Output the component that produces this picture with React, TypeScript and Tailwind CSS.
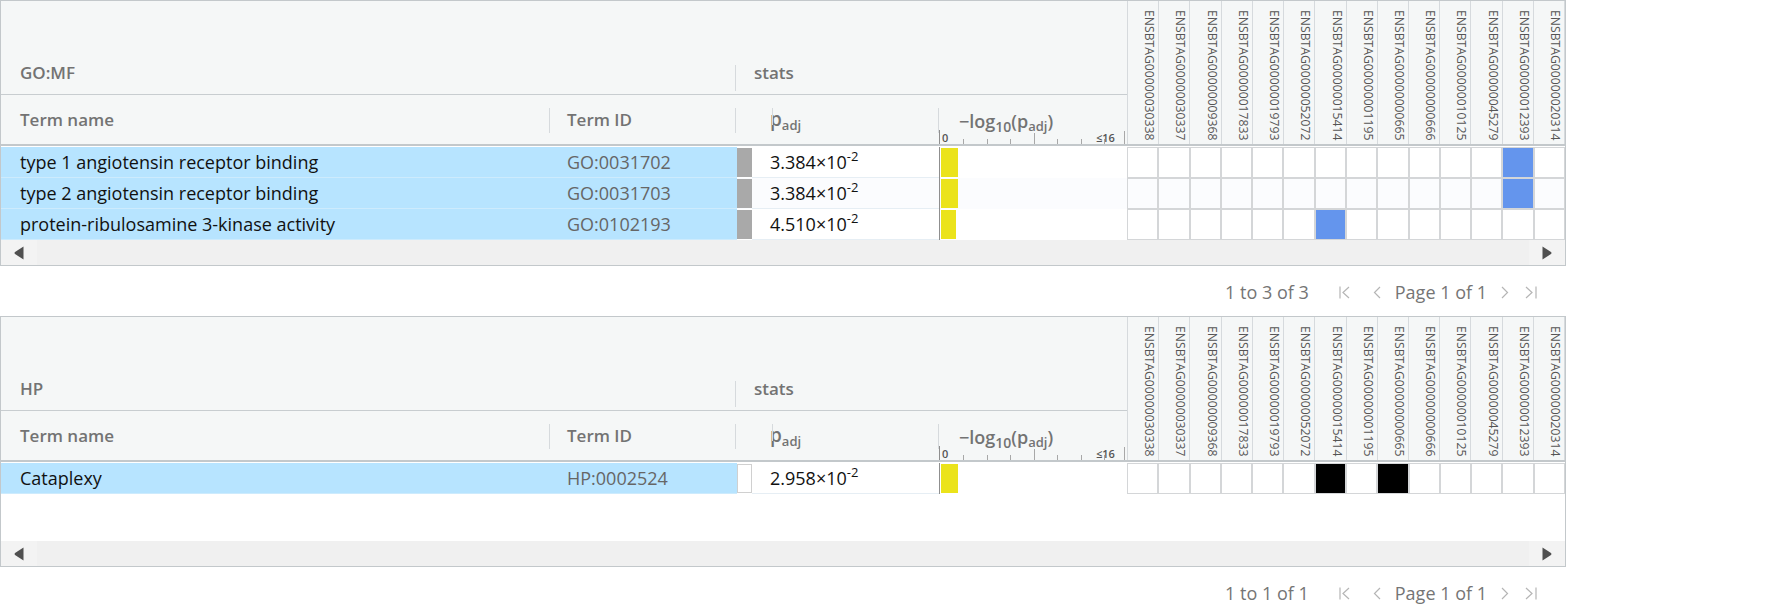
import React from "react";

const GENES = [
  "ENSBTAG00000030338",
  "ENSBTAG00000030337",
  "ENSBTAG00000009368",
  "ENSBTAG00000017833",
  "ENSBTAG00000019793",
  "ENSBTAG00000052072",
  "ENSBTAG00000015414",
  "ENSBTAG00000001195",
  "ENSBTAG00000000665",
  "ENSBTAG00000000666",
  "ENSBTAG00000010125",
  "ENSBTAG00000045279",
  "ENSBTAG00000012393",
  "ENSBTAG00000020314",
];

type Row = {
  name: string;
  id: string;
  mant: string;
  bar: number;
  hits: number[];
};

type TableProps = {
  source: string;
  rows: Row[];
  markClass: string;
  hitClass: string;
  bodyClass: string;
  count: string;
};

const Axis = () => (
  <svg width="188" height="14" className="absolute bottom-0 left-0" viewBox="0 0 188 14">
    <line x1="0.5" y1="0" x2="0.5" y2="14" stroke="#8f8f8f" />
    <text x="3" y="12" fontSize="11" fill="#555" fontFamily="Open Sans, sans-serif">0</text>
    {[24, 48, 71, 118, 142, 165].map((x) => (
      <line key={x} x1={x + 0.5} y1="9" x2={x + 0.5} y2="14" stroke="#a8a8a8" />
    ))}
    <line x1="95.5" y1="3" x2="95.5" y2="14" stroke="#a8a8a8" />
    <text x="157" y="12" fontSize="11" fill="#555" fontFamily="Open Sans, sans-serif">≤16</text>
    <line x1="185.5" y1="1" x2="185.5" y2="14" stroke="#a8a8a8" />
  </svg>
);

const Sep = ({ className }: { className: string }) => (
  <div className={`absolute w-px bg-[#d6dadd] ${className}`} />
);

const Scrollbar = () => (
  <div className="flex h-[25px] bg-[#f0f0f0]">
    <div className="flex w-[36px] items-center justify-center bg-[#f3f3f3]">
      <svg width="10" height="14" viewBox="0 0 10 14">
        <path d="M9.5 0.5 L1 6 Q0 7 1 8 L9.5 13.5 Z" fill="#505050" />
      </svg>
    </div>
    <div className="flex-1" />
    <div className="flex w-[36px] items-center justify-center bg-[#f3f3f3]">
      <svg width="10" height="14" viewBox="0 0 10 14">
        <path d="M0.5 0.5 L9 6 Q10 7 9 8 L0.5 13.5 Z" fill="#505050" />
      </svg>
    </div>
  </div>
);

const Pager = ({ count }: { count: string }) => (
  <div className="flex h-[50px] w-[1566px] items-center justify-end pr-[29px] pt-[3px] text-[18px] text-[#757575]">
    <span>{count}</span>
    <svg width="11" height="13" viewBox="0 0 11 13" className="ml-[30px]">
      <path d="M1 0.5 V12.5 M10 1 L4 6.5 L10 12" stroke="#b5b5b5" strokeWidth="1.2" fill="none" />
    </svg>
    <svg width="8" height="13" viewBox="0 0 8 13" className="ml-[23px]">
      <path d="M7 1 L1.5 6.5 L7 12" stroke="#b5b5b5" strokeWidth="1.2" fill="none" />
    </svg>
    <span className="ml-[14px]">Page 1 of 1</span>
    <svg width="8" height="13" viewBox="0 0 8 13" className="ml-[14px]">
      <path d="M1 1 L6.5 6.5 L1 12" stroke="#b5b5b5" strokeWidth="1.2" fill="none" />
    </svg>
    <svg width="12" height="13" viewBox="0 0 12 13" className="ml-[16px]">
      <path d="M1 1 L7 6.5 L1 12 M11 0.5 V12.5" stroke="#b5b5b5" strokeWidth="1.2" fill="none" />
    </svg>
  </div>
);

const Table = ({ source, rows, markClass, hitClass, bodyClass, count }: TableProps) => (
  <div>
    <div className="w-[1566px] border border-[#c3c8cb] bg-white">
      {/* header */}
      <div className="flex border-b-2 border-[#c3c8cb] bg-[#f5f7f7] font-semibold text-[#737373]">
        <div className="flex w-[1126px] flex-col">
          <div className="relative flex h-[94px] items-end border-b border-[#c8cdd0] pb-[9px] text-[17px]">
            <div className="w-[736px] pl-[19px]">{source}</div>
            <div className="pl-[17px]">stats</div>
            <Sep className="left-[734px] top-[64px] h-[26px]" />
          </div>
          <div className="relative flex h-[49px] items-center text-[17px]">
            <div className="w-[548px] pl-[19px]">Term name</div>
            <div className="w-[188px] pl-[18px]">Term ID</div>
            <div className="w-[15px]" />
            <div className="w-[187px] pl-[18px] text-[19px]">
              p<sub className="text-[13px]">adj</sub>
            </div>
            <div className="relative h-full w-[188px]">
              <div className="flex h-full items-center pl-[20px] pt-[4px] text-[18px]">
                <span>
                  −log<sub className="text-[14px]">10</sub>(p<sub className="text-[13px]">adj</sub>)
                </span>
              </div>
              <Axis />
            </div>
            <Sep className="left-[548px] top-[13px] h-[25px]" />
            <Sep className="left-[734px] top-[13px] h-[25px]" />
            <Sep className="left-[771px] top-[13px] h-[17px]" />
            <Sep className="left-[937px] top-[13px] h-[25px]" />
          </div>
        </div>
        <div className="flex w-[438px]">
          {GENES.map((g) => (
            <div
              key={g}
              className="flex flex-1 justify-center border-l border-[#d6dadd] pt-[6px] text-[12.2px] font-normal text-[#555] last:border-r [writing-mode:vertical-rl]"
            >
              {g}
            </div>
          ))}
        </div>
      </div>
      {/* body */}
      <div className={`pt-[1px] text-[18px] ${bodyClass}`}>
        {rows.map((r, i) => (
          <div key={r.id} className={`flex h-[31px] ${i % 2 === 1 ? "bg-[#fbfcfe]" : "bg-white"}`}>
            <div className="flex w-[548px] items-center border-b border-[#cdebfd] bg-[#b7e4ff] pl-[19px] text-[#111]">
              {r.name}
            </div>
            <div className="flex w-[188px] items-center border-b border-[#cdebfd] bg-[#b7e4ff] pl-[18px] text-[#666]">
              {r.id}
            </div>
            <div className="w-[15px] py-[1px]">
              <div className={`h-full w-full ${markClass}`} />
            </div>
            <div className="flex w-[187px] items-center border-b border-[#e6eef4] pl-[18px] text-[#111]">
              {r.mant}×10<sup className="text-[13px]">-2</sup>
            </div>
            <div className="w-[188px] border-l border-[#8f8f8f] py-[1px] pl-[1px]">
              <div className="h-full bg-[#ebe31b]" style={{ width: r.bar }} />
            </div>
            <div className="flex w-[438px]">
              {GENES.map((g, j) => (
                <div
                  key={g}
                  className={`flex-1 border border-[#d4d6d8] ${r.hits.includes(j) ? hitClass : ""}`}
                />
              ))}
            </div>
          </div>
        ))}
      </div>
      <Scrollbar />
    </div>
    <Pager count={count} />
  </div>
);

export default function App() {
  return (
    <div className="h-[616px] w-[1782px] overflow-hidden bg-white font-['Open_Sans',sans-serif]">
      <Table
        source="GO:MF"
        markClass="bg-[#a9a9a9]"
        hitClass="bg-[#6495ed]"
        bodyClass="h-[94px]"
        count="1 to 3 of 3"
        rows={[
          { name: "type 1 angiotensin receptor binding", id: "GO:0031702", mant: "3.384", bar: 17, hits: [12] },
          { name: "type 2 angiotensin receptor binding", id: "GO:0031703", mant: "3.384", bar: 17, hits: [12] },
          { name: "protein-ribulosamine 3-kinase activity", id: "GO:0102193", mant: "4.510", bar: 15, hits: [6] },
        ]}
      />
      <Table
        source="HP"
        markClass="bg-white border border-[#d0d0d0]"
        hitClass="bg-black"
        bodyClass="h-[79px]"
        count="1 to 1 of 1"
        rows={[{ name: "Cataplexy", id: "HP:0002524", mant: "2.958", bar: 17, hits: [6, 8] }]}
      />
    </div>
  );
}
